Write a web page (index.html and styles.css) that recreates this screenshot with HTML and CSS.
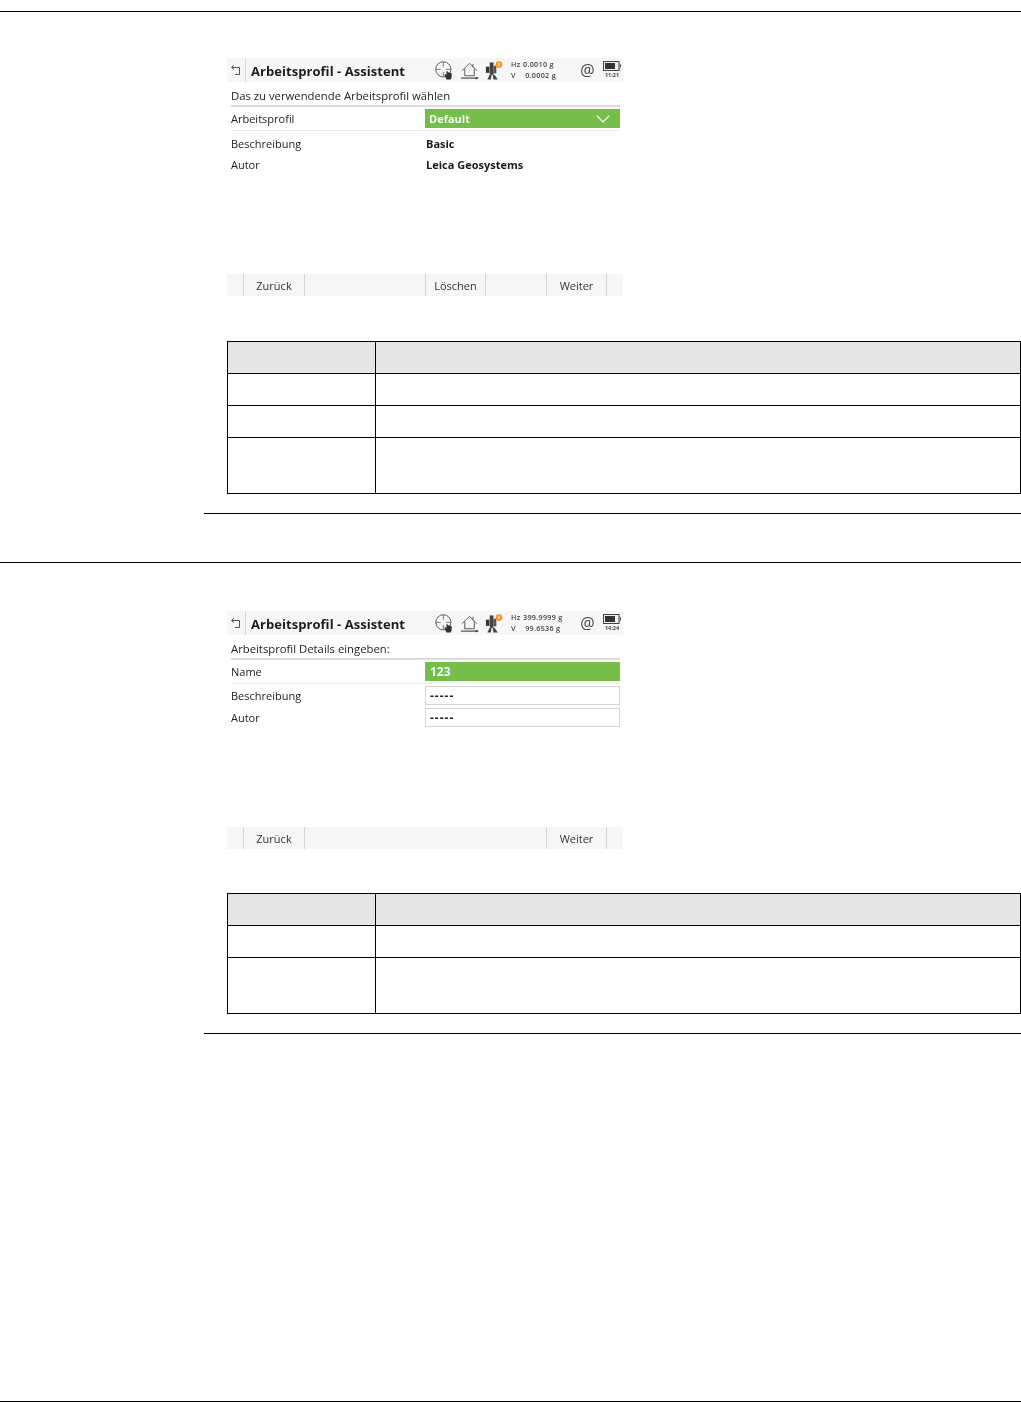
FILE: index.html
```html
<!DOCTYPE html>
<html lang="de">
<head>
<meta charset="utf-8">
<title>Arbeitsprofil - Assistent</title>
<link rel="stylesheet" href="styles.css">
</head>
<body>
<svg class="defs" width="0" height="0" aria-hidden="true">
  <defs>
    <symbol id="i-back" viewBox="0 0 12 12">
      <path d="M1.5 3.5H9.5V10.5H5M1.5 3.5L4 1.2M1.5 3.5L4 5.6" fill="none" stroke="#555" stroke-width="1"/>
    </symbol>
    <symbol id="i-target" viewBox="0 0 20 20">
      <circle cx="8.8" cy="8.8" r="8" fill="none" stroke="#555" stroke-width="1"/>
      <path d="M8.8 1V6M8.8 11.5V16.5M1 8.8H6M11.5 8.8H16.5" fill="none" stroke="#777" stroke-width="1"/>
      <path d="M11.5 18.5L10 14.5C9.8 13.6 11 13.4 11.4 14.2L12 15.2V11.2C12 10.3 13.4 10.3 13.4 11.2V12.2C13.6 11.6 14.8 11.6 14.9 12.4C15.2 11.9 16.2 12 16.3 12.8C16.6 12.4 17.6 12.6 17.6 13.4V16.5L16.6 19.5H12Z" fill="#333"/>
    </symbol>
    <symbol id="i-home" viewBox="0 0 20 20">
      <path d="M2.2 10.2L10 2.4L17.8 10.2M5 8V15.5H15V8M13.6 3V6.5" fill="none" stroke="#555" stroke-width="1"/>
      <path d="M1 18H19" stroke="#444" stroke-width="1.2"/>
      <path d="M16.5 16.5L19.8 18L16.5 19.5Z" fill="#444"/>
    </symbol>
    <symbol id="i-total" viewBox="0 0 20 20">
      <rect x="6" y="1.5" width="4" height="13" fill="#444"/>
      <rect x="2" y="6" width="3.6" height="6.5" fill="#333"/>
      <rect x="10" y="5" width="3" height="8" fill="#555"/>
      <path d="M6 14.5H8L7.2 19.5H3.5ZM9 14.5H11L14.5 19.5H10Z" fill="#444"/>
      <circle cx="15.8" cy="3.8" r="3.6" fill="#f0962a"/>
      <path d="M15.8 2V5.6" stroke="#fff" stroke-width="1"/>
    </symbol>
    <symbol id="i-batt" viewBox="0 0 18 10">
      <rect x="0.5" y="0.5" width="15.5" height="9" fill="#eee" stroke="#444" stroke-width="1"/>
      <rect x="2" y="2" width="10" height="6" fill="#333"/>
      <path d="M16.5 2.5C17.8 3.5 17.8 6.5 16.5 7.5" fill="none" stroke="#444" stroke-width="1"/>
    </symbol>
    <symbol id="i-chev" viewBox="0 0 14 8">
      <path d="M0.7 0.7L7 7L13.3 0.7" fill="none" stroke="#fff" stroke-width="1.2"/>
    </symbol>
  </defs>
</svg>

<div class="page">
  <section class="section section-first">
    <div class="screen">
      <header class="titlebar">
        <svg class="ic-back"><use href="#i-back"/></svg>
        <span class="title-sep"></span>
        <h1 class="title">Arbeitsprofil - Assistent</h1>
        <svg class="ic ic-target"><use href="#i-target"/></svg>
        <svg class="ic ic-home"><use href="#i-home"/></svg>
        <svg class="ic ic-total"><use href="#i-total"/></svg>
        <div class="angles">
          <div class="angle"><span class="angle-k">Hz</span><span>0.0010 g</span></div>
          <div class="angle"><span class="angle-k">V</span><span>&nbsp;0.0002 g</span></div>
        </div>
        <span class="at">@</span>
        <div class="batt">
          <svg class="ic-batt"><use href="#i-batt"/></svg>
          <span class="clock">11:21</span>
        </div>
      </header>
      <p class="prompt">Das zu verwendende Arbeitsprofil wählen</p>
      <div class="row row-active">
        <span class="label">Arbeitsprofil</span>
        <div class="field field-green"><span>Default</span><svg class="ic-chev"><use href="#i-chev"/></svg></div>
      </div>
      <div class="row row-plain">
        <span class="label">Beschreibung</span>
        <span class="value">Basic</span>
      </div>
      <div class="row row-plain">
        <span class="label">Autor</span>
        <span class="value">Leica Geosystems</span>
      </div>
      <footer class="softkeys">
        <span class="key key-a">Zurück</span>
        <span class="key key-b">Löschen</span>
        <span class="key key-c">Weiter</span>
      </footer>
    </div>
    <table class="grid">
      <colgroup><col class="col-a"><col></colgroup>
      <tr class="tr-head"><th></th><th></th></tr>
      <tr class="tr-std"><td></td><td></td></tr>
      <tr class="tr-std"><td></td><td></td></tr>
      <tr class="tr-tall"><td></td><td></td></tr>
    </table>
    <div class="endrule"></div>
  </section>

  <section class="section section-second">
    <div class="screen">
      <header class="titlebar">
        <svg class="ic-back"><use href="#i-back"/></svg>
        <span class="title-sep"></span>
        <h1 class="title">Arbeitsprofil - Assistent</h1>
        <svg class="ic ic-target"><use href="#i-target"/></svg>
        <svg class="ic ic-home"><use href="#i-home"/></svg>
        <svg class="ic ic-total"><use href="#i-total"/></svg>
        <div class="angles">
          <div class="angle"><span class="angle-k">Hz</span><span>399.9999 g</span></div>
          <div class="angle"><span class="angle-k">V</span><span>&nbsp;99.6536 g</span></div>
        </div>
        <span class="at">@</span>
        <div class="batt">
          <svg class="ic-batt"><use href="#i-batt"/></svg>
          <span class="clock">14:24</span>
        </div>
      </header>
      <p class="prompt">Arbeitsprofil Details eingeben:</p>
      <div class="row row-active">
        <span class="label">Name</span>
        <div class="field field-green"><span class="field-num">123</span></div>
      </div>
      <div class="row row-input">
        <span class="label">Beschreibung</span>
        <div class="field field-input">-----</div>
      </div>
      <div class="row row-input">
        <span class="label">Autor</span>
        <div class="field field-input">-----</div>
      </div>
      <footer class="softkeys">
        <span class="key key-a">Zurück</span>
        <span class="key key-gap"></span>
        <span class="key key-c">Weiter</span>
      </footer>
    </div>
    <table class="grid">
      <colgroup><col class="col-a"><col></colgroup>
      <tr class="tr-head"><th></th><th></th></tr>
      <tr class="tr-std"><td></td><td></td></tr>
      <tr class="tr-tall"><td></td><td></td></tr>
    </table>
    <div class="endrule"></div>
  </section>

  <div class="pagefoot"></div>
</div>
</body>
</html>
```

FILE: styles.css
```css
* { box-sizing: border-box; }

html, body {
  margin: 0;
  padding: 0;
  background: #fff;
}

.defs { position: absolute; }

.page {
  display: flex;
  flex-direction: column;
  height: 1402px;
  padding-top: 11px;
  overflow: hidden;
}

.section {
  border-top: 1px solid #000;
  padding-left: 204px;
}
.section-first { padding-top: 46px; }
.section-second { padding-top: 48px; margin-top: 48px; }
.section-first .grid { margin-top: 45px; }
.section-second .grid { margin-top: 44px; }

.endrule {
  border-top: 1px solid #000;
  margin-top: 19px;
}

.pagefoot {
  margin-top: auto;
  border-top: 1px solid #000;
}

/* device screen */
.screen {
  display: flex;
  flex-direction: column;
  width: 396px;
  height: 238px;
  margin-left: 23px;
  font-family: "Open Sans", "Noto Sans", sans-serif;
  color: #222;
  filter: blur(0.35px);
}

.titlebar {
  display: flex;
  align-items: center;
  height: 24px;
  flex: none;
  background: #f6f6f6;
}

.ic-back {
  width: 12px;
  height: 12px;
  margin-left: 3px;
  flex: none;
}
.title-sep {
  width: 1px;
  height: 24px;
  margin-left: 3px;
  background: #d8d8d8;
  flex: none;
}
.title {
  margin: 2px 0 0 5px;
  width: 184px;
  flex: none;
  font-size: 13px;
  font-weight: 700;
  line-height: 24px;
  letter-spacing: 0.05px;
  color: #1c1c1c;
  white-space: nowrap;
}

.ic { flex: none; width: 19px; height: 19px; }
.ic-home { margin-left: 6px; }
.ic-total { margin-left: 5px; }

.angles {
  margin-left: 8px;
  width: 69px;
  flex: none;
  font-size: 7.2px;
  line-height: 11px;
  font-weight: 600;
  letter-spacing: 0.3px;
  color: #444;
}
.angle { display: flex; white-space: nowrap; }
.angle-k { width: 12px; flex: none; }

.at {
  width: 15px;
  flex: none;
  font-size: 16px;
  color: #444;
  text-align: center;
}
.batt {
  display: flex;
  flex-direction: column;
  align-items: center;
  width: 18px;
  margin-left: 8px;
  flex: none;
}
.ic-batt { width: 18px; height: 10px; }
.clock {
  font-size: 5.5px;
  line-height: 8px;
  font-weight: 700;
  color: #444;
}

.prompt {
  margin: 0 0 0 4px;
  width: 389px;
  height: 25px;
  flex: none;
  border-bottom: 2px solid #dcdcdc;
  font-size: 11.3px;
  line-height: 27px;
  white-space: nowrap;
}

.row {
  display: grid;
  grid-template-columns: 194px 195px;
  align-items: center;
  margin-left: 4px;
  flex: none;
  font-size: 11px;
}
.row-active {
  width: 389px;
  height: 24px;
  border-bottom: 1px solid #ececec;
  padding-bottom: 2px;
  padding-top: 2px;
}
.row-plain { height: 21px; padding-top: 4px; }
.row-input { height: 21.5px; padding-top: 2px; }

.value {
  padding-left: 1px;
  font-weight: 700;
  color: #1a1a1a;
}

.field {
  display: flex;
  align-items: center;
  height: 19px;
  padding-left: 4px;
  font-weight: 700;
}
.field-green {
  justify-content: space-between;
  padding-right: 10px;
  background: #76bd4c;
  color: #f4fbf0;
}
.field-num {
  padding-left: 1px;
  font-size: 12px;
}
.ic-chev { width: 14px; height: 8px; }
.field-input {
  background: #fff;
  border: 1px solid #d4d4d4;
  padding-left: 4px;
  letter-spacing: 1px;
  font-size: 12px;
  color: #222;
}

.softkeys {
  display: flex;
  align-items: center;
  height: 22px;
  margin-top: auto;
  flex: none;
  padding-left: 16px;
  background: #f6f6f6;
  font-size: 11px;
  color: #333;
}
.key {
  height: 22px;
  line-height: 23px;
  text-align: center;
  border-left: 1px solid #d4d4d4;
  border-right: 1px solid #d4d4d4;
  flex: none;
}
.key-a { width: 62px; }
.key-b { width: 61px; margin-left: 120px; }
.key-c { width: 61px; margin-left: 60px; }
.key-gap { width: 181px; border: 0; }

/* tables */
.grid {
  border-collapse: collapse;
  table-layout: fixed;
  width: 794px;
  margin-left: 23px;
}
.col-a { width: 148px; }
.grid th, .grid td {
  border: 1px solid #000;
  padding: 0;
}
.grid th { background: #e6e6e6; }
.tr-head, .tr-std { height: 32px; }
.tr-tall { height: 56px; }
```
